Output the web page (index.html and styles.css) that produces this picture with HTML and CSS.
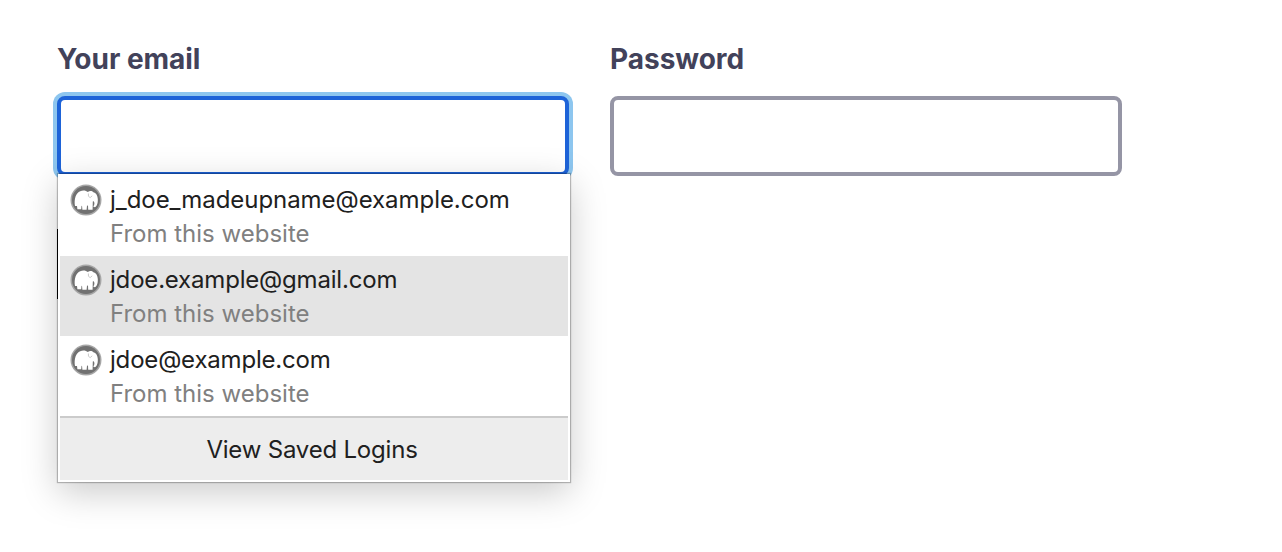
FILE: index.html
```html
<!DOCTYPE html>
<html lang="en">
<head>
<meta charset="utf-8">
<title>Sign in</title>
<link rel="stylesheet" href="styles.css">
</head>
<body>
<svg class="sprite" aria-hidden="true">
  <symbol id="mammoth" viewBox="0 0 32 32">
    <circle cx="16" cy="16" r="15.5" fill="#a6a6a6"/>
    <circle cx="16" cy="16" r="14" fill="#717171"/>
    <path d="M5 22C3.8 15 6 8.8 10.2 7.2C13.2 5.8 16.2 6.6 17.8 8C20 6.4 22.2 7.1 23.4 8.2C26 8.8 27.7 11.6 27.8 15C28 18.5 27.2 22.4 24.9 23.2L23.2 22.4C24.8 20.8 24.6 18.5 23.8 17.2L22.8 17.5L22.6 25.8H18.2L18 21.6L17 21.8L16.6 25.8H12.4L12 21.8L11.5 22L11.2 25.2H7.4L7 22Z" fill="#fff"/>
    <path d="M18.4 9.5Q17.6 13 20.2 13.6L22.2 11.8" fill="none" stroke="#c4c4c4" stroke-width=".9"/>
  </symbol>
</svg>
<form class="login">
  <div class="field">
    <label class="label" for="email">Your email</label>
    <input class="input focused" id="email" type="text">
    <div class="popup">
      <div class="item">
        <svg class="icon"><use href="#mammoth"/></svg>
        <div><div class="name name-long">j_doe_madeupname@example.com</div><div class="source">From this website</div></div>
      </div>
      <div class="item selected">
        <svg class="icon"><use href="#mammoth"/></svg>
        <div><div class="name">jdoe.example@gmail.com</div><div class="source">From this website</div></div>
      </div>
      <div class="item">
        <svg class="icon"><use href="#mammoth"/></svg>
        <div><div class="name">jdoe@example.com</div><div class="source">From this website</div></div>
      </div>
      <div class="footer">View Saved Logins</div>
    </div>
    <div class="submit-edge"></div>
  </div>
  <div class="field">
    <label class="label" for="password">Password</label>
    <input class="input" id="password" type="password">
  </div>
</form>
</body>
</html>
```
FILE: styles.css
```css
* { box-sizing: border-box; }
body { margin: 0; min-height: 552px; background: #fff; font-family: Inter, "Liberation Sans", sans-serif; }
.sprite { position: absolute; width: 0; height: 0; }
.login { display: flex; gap: 41px; min-height: 552px; padding: 40px 57px 0; }
.field { position: relative; width: 512px; }
.label { display: block; height: 56px; line-height: 38px; font-size: 28px; font-weight: 700; letter-spacing: -.03px; color: #42425a; }
.input { display: block; width: 512px; height: 80px; border: 4px solid #9595a5; border-radius: 8px; background: #fff; outline: none; }
.focused { border-color: #1d63d8; box-shadow: 0 0 0 4px #8dc6ef; }
.submit-edge { position: absolute; left: 0; top: 189px; width: 1px; height: 70px; background: #000; }
.popup {
  position: absolute; left: 1px; top: 134px; width: 512px; height: 308px; padding: 2px;
  background: #fff;
  box-shadow: 0 0 1px 1px rgba(0,0,0,.25), 0 10px 34px rgba(0,0,0,.21);
}
.item { display: flex; height: 80px; padding: 8px 10px; gap: 8px; }
.selected { background: #e4e4e4; }
.icon { width: 32px; height: 32px; flex: none; }
.name { height: 34px; line-height: 32px; font-size: 24px; letter-spacing: -.19px; color: #202020; white-space: nowrap; }
.name-long { letter-spacing: -.05px; }
.source { line-height: 32px; font-size: 24px; color: #808080; }
.footer { height: 64px; border-top: 2px solid #cbcbcb; background: #ededed; color: #202020; text-align: center; font-size: 24px; letter-spacing: -.2px; line-height: 63px; padding-right: 4px; }
```
